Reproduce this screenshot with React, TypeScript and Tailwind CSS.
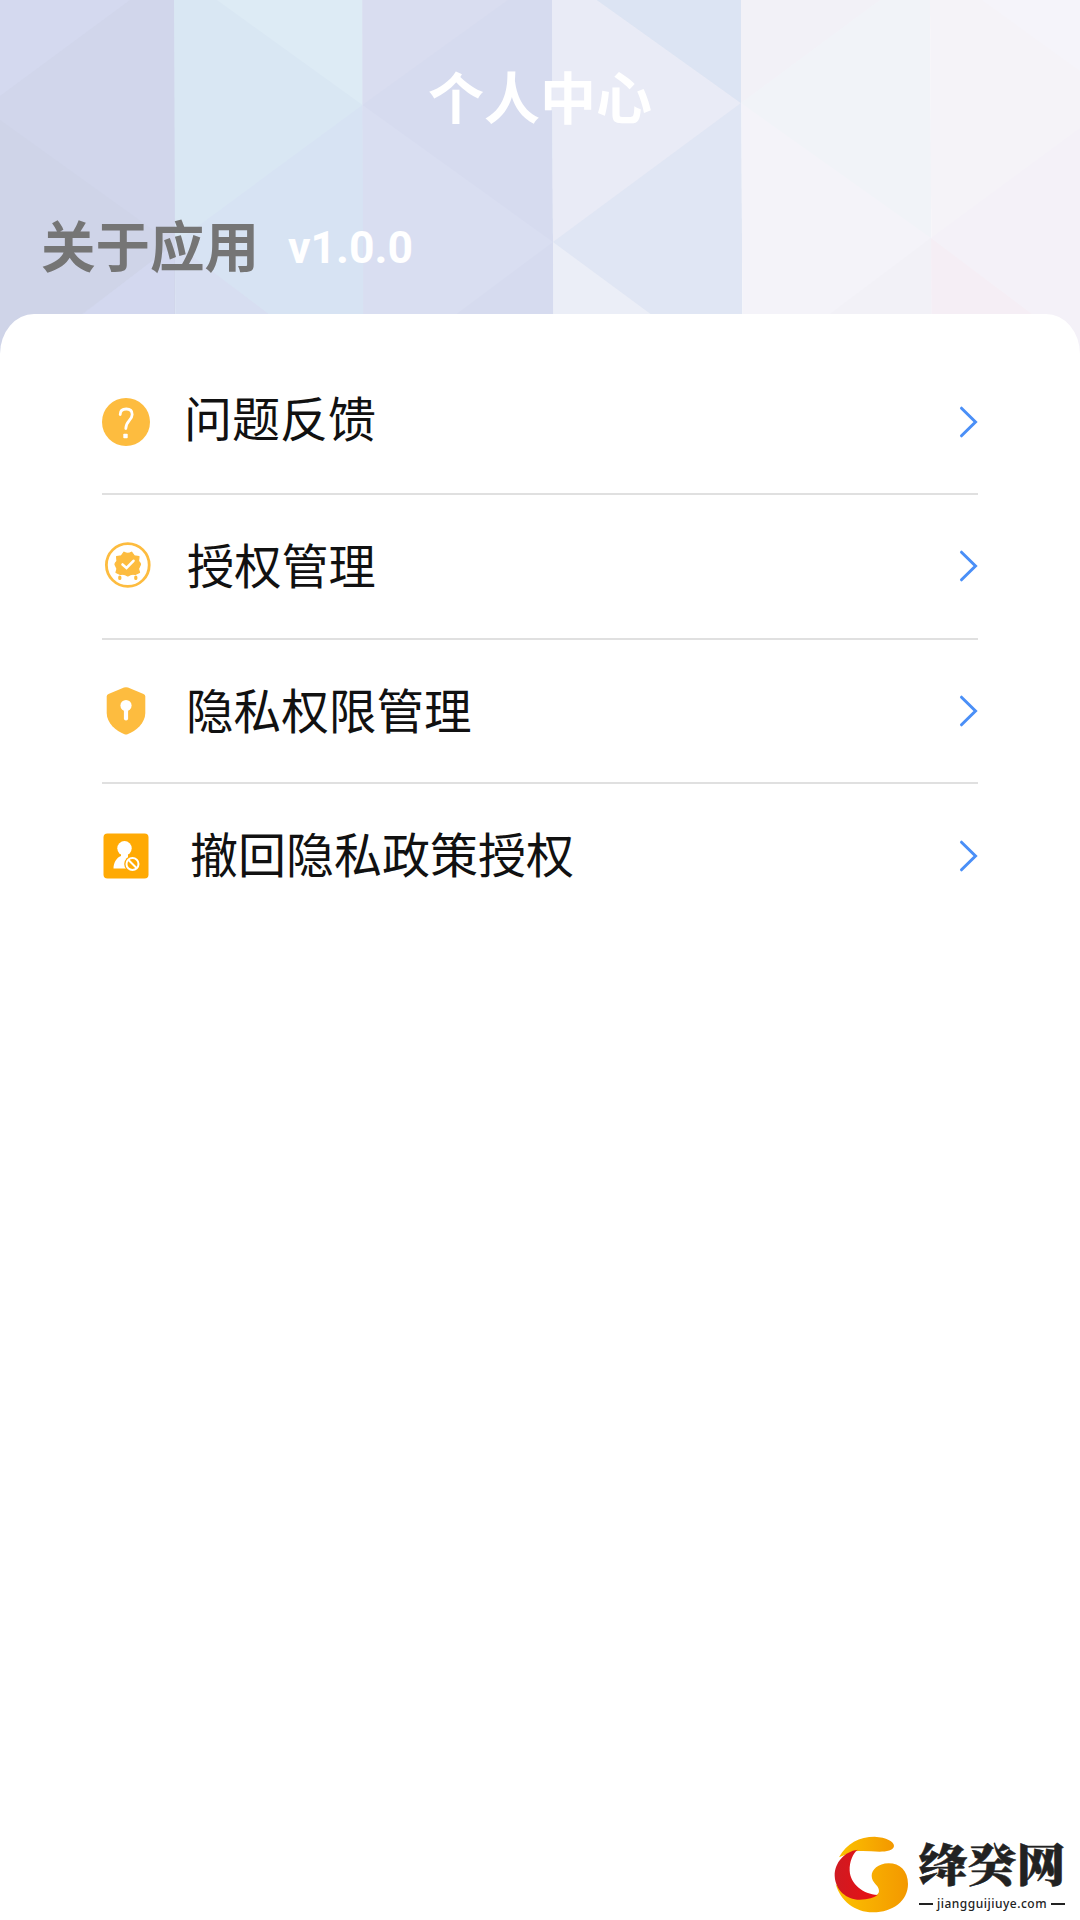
import React from 'react';

interface MenuItem {
  label: string;
  icon: React.ReactNode;
  labelClass: string;
}

const HeaderPattern = () => (
  <svg
    className="absolute inset-0 w-full h-full"
    viewBox="0 0 1080 360"
    preserveAspectRatio="none"
    aria-hidden="true"
  >
    {/* column 1 */}
    <rect width="175" height="360" fill="#d1d6eb" />
    <path d="M0 0H130L0 96Z" fill="#d4d9ef" />
    <path d="M0 120L174 245L20 360H0Z" fill="#cfd4e8" />
    <path d="M174 244V360H23Z" fill="#d3d8ef" />
    {/* column 2 */}
    <path d="M174 0H362.500L363.500 360H175.500Z" fill="#d9e7f3" />
    <path d="M217 0H362.500V105Z" fill="#ddebf5" />
    <path d="M362.500 105L175 243L330 360H364Z" fill="#d7e3f3" />
    <path d="M175 243L330 360H175.500Z" fill="#d7def1" />
    {/* column 3 */}
    <path d="M362.500 0H552L553.500 360H363.500Z" fill="#d6dbef" />
    <path d="M362.500 0H508L362.500 105Z" fill="#d9ddf0" />
    <path d="M362.500 105L553 242L395 360H363.500Z" fill="#d9def1" />
    {/* column 4 */}
    <path d="M552 0H741L742.500 360H553.500Z" fill="#e0e6f4" />
    <path d="M552 0H597L741 103L553 242Z" fill="#e9ebf6" />
    <path d="M597 0H741V103Z" fill="#dce4f3" />
    <path d="M553 242L713 360H553.500Z" fill="#ebeef7" />
    {/* column 5 */}
    <path d="M741 0H930L932 360H742.500Z" fill="#f4f3f9" />
    <path d="M741 0H880L741 103Z" fill="#f2f1f7" />
    <path d="M880 0H930L931 238L741 103Z" fill="#f1f3f8" />
    <path d="M931 238L769 360H932Z" fill="#f2f1f7" />
    {/* column 6 */}
    <path d="M930 0H1080V360H932Z" fill="#f5f3f8" />
    <path d="M982 0H1080V71Z" fill="#f5f4fa" />
    <path d="M1080 128L931 238L1080 350Z" fill="#f4f1f8" />
    <path d="M931 238L1093 360H932Z" fill="#f5eef5" />
  </svg>
);

const FeedbackIcon = () => (
  <svg width="48" height="48" viewBox="0 0 48 48" fill="none">
    <circle cx="24" cy="24" r="24" fill="#fdbc3f" />
    <path
      d="M18.200 16.500C18.200 13 20.500 11 24.300 11C28 11 30.200 13.200 30.200 16.500C30.200 22 23.800 23 23.800 30.500"
      stroke="#fff"
      strokeWidth="2.800"
      strokeLinecap="round"
    />
    <rect x="21.300" y="35.800" width="4.400" height="4.400" rx="0.800" fill="#fff" />
  </svg>
);

const AuthIcon = () => (
  <svg width="48" height="48" viewBox="0 0 48 48" fill="none" className="relative -top-[1px] overflow-visible">
    <circle cx="25.800" cy="24" r="21.400" stroke="#fdbc3f" strokeWidth="2.800" />
    <path
      d="M22 11.200Q25.800 13.500 29.600 11.200L32.300 14.800L37 15.600L36.500 20.200Q39.500 23 38 24.500L36.500 27.800L37.500 31.500L33.300 33.500Q29.500 32.300 25.800 35Q22 32.300 18.300 33.500L14 31.500L15 27.800L13.500 24.500Q12 23 15 20.200L14.600 15.600L19.300 14.800Z"
      fill="#fdbc3f"
      stroke="#fdbc3f"
      strokeWidth="1.200"
      strokeLinejoin="round"
    />
    <path d="M20.500 23.500L24.500 27L31.500 19.800" stroke="#fff" strokeWidth="2.600" strokeLinecap="round" />
    <path d="M17.800 36V37.500M33.800 36V37.500" stroke="#fdbc3f" strokeWidth="3.200" strokeLinecap="round" />
  </svg>
);

const ShieldIcon = () => (
  <svg width="48" height="48" viewBox="0 0 48 48">
    <path
      d="M22 .6Q24 -.2 26 .6L41.500 7Q43.300 7.800 43.300 9.500V26C43.300 36 34 44 25.500 47.200Q24 47.700 22.500 47.200C14 44 4.700 36 4.700 26V9.500Q4.700 7.800 6.500 7Z"
      fill="#fdbc3f"
    />
    <circle cx="24" cy="18.500" r="5.600" fill="#fff" />
    <path d="M24 20V31.500" stroke="#fff" strokeWidth="4.200" strokeLinecap="round" />
  </svg>
);

const RevokeIcon = () => (
  <svg width="48" height="48" viewBox="0 0 48 48" fill="none">
    <rect x="1.500" y="1.500" width="45" height="45" rx="4" fill="#ffaa04" />
    <circle cx="22.500" cy="16.300" r="7.200" fill="#fff" />
    <path d="M19 20H26V25L31 28L26 36.500H11.500C11.500 31 14.500 25.500 19 24Z" fill="#fff" />
    <circle cx="30.500" cy="32" r="8.300" fill="#ffaa04" />
    <circle cx="30.500" cy="32" r="6" stroke="#fff" strokeWidth="2" />
    <path d="M26.500 28L34.500 36" stroke="#fff" strokeWidth="2" />
  </svg>
);

const Chevron = () => (
  <svg width="20" height="32" viewBox="0 0 20 32" fill="none">
    <path d="M2.500 2.200L16.500 16L2.500 29.800" stroke="#4a8ff7" strokeWidth="3" strokeLinecap="round" />
  </svg>
);

const SiteMark = () => (
  <div className="flex items-center">
    <svg width="74" height="78" viewBox="43 46 222 234">
      <defs>
        <linearGradient id="gold" x1="0" x2="1">
          <stop offset="0" stopColor="#fcc200" />
          <stop offset="1" stopColor="#f39800" />
        </linearGradient>
        <linearGradient id="red" x1="0" x2="1">
          <stop offset="0" stopColor="#cf1a22" />
          <stop offset="1" stopColor="#ea0f12" />
        </linearGradient>
      </defs>
      <path
        d="M58 110C80 68 120 48 165 48C200 50 223 62 223 76C222 89 200 93 180 93C155 92 130 89 105 92Z"
        fill="url(#gold)"
      />
      <path
        d="M48 190C62 240 105 275 160 275C220 275 265 240 265 190C265 150 240 128 207 128C175 128 156 148 156 165C156 188 178 192 178 211C178 218 174 222 165 226C120 245 75 225 48 190Z"
        fill="url(#gold)"
      />
      <path
        d="M114 87C75 92 45 125 45 165C47 208 80 237 120 237C145 237 165 230 174 223C130 220 92 190 90 150C89 122 100 98 114 87Z"
        fill="url(#red)"
      />
    </svg>
    <div className="ml-[10px] w-[148px] flex flex-col items-center text-[#222]">
      <div className="text-[49px] leading-[48px] font-black whitespace-nowrap scale-y-[0.92] [-webkit-text-stroke:0.6px_#222] font-['Noto_Serif_CJK_SC','Noto_Sans_CJK_SC',serif]">
        绛癸网
      </div>
      <div className="mt-[9px] w-[146px] flex items-center justify-between">
        <span className="w-[14px] h-[2px] bg-[#222]" />
        <span className="text-[12px] leading-[16px] font-medium tracking-[0.5px] font-['Noto_Sans','Open_Sans',sans-serif]">
          jiangguijiuye.com
        </span>
        <span className="w-[14px] h-[2px] bg-[#222]" />
      </div>
    </div>
  </div>
);

const menuItems: MenuItem[] = [
  { label: '问题反馈', icon: <FeedbackIcon />, labelClass: 'ml-[34px] text-[48px] -mt-[2px]' },
  { label: '授权管理', icon: <AuthIcon />, labelClass: 'ml-[37px] text-[47.200px] mt-[4px]' },
  { label: '隐私权限管理', icon: <ShieldIcon />, labelClass: 'ml-[36px] text-[47.600px] mt-[4px]' },
  { label: '撤回隐私政策授权', icon: <RevokeIcon />, labelClass: 'ml-[40px] text-[48px] mt-[2px]' },
];

const App: React.FC = () => {
  return (
    <div className="w-[1080px] h-[1920px] overflow-hidden flex flex-col bg-white font-['Roboto','Noto_Sans_CJK_SC',sans-serif]">
      <header className="relative h-[360px] shrink-0">
        <HeaderPattern />
        <div className="relative flex flex-col">
          <h1 className="mt-[60px] text-center text-[56px] leading-[80px] font-bold text-white">个人中心</h1>
          <div className="mt-[68px] pl-[41px] flex items-center leading-[80px] font-bold">
            <span className="text-[54.500px] text-[#757575]">关于应用</span>
            <span className="ml-[29px] text-[44.500px] text-white">v1.0.0</span>
          </div>
        </div>
      </header>

      <main className="relative -mt-[46px] flex-1 rounded-t-[34px_40px] bg-white px-[102px] pt-[36.500px]">
        {menuItems.map((item, i) => (
          <button
            key={item.label}
            className={
              i < menuItems.length - 1
                ? 'w-full h-[144.600px] flex items-center border-b-2 border-[#e0e0e0] text-left'
                : 'w-full h-[143px] flex items-center text-left'
            }
          >
            {item.icon}
            <span className={`${item.labelClass} leading-[70px] text-[#111]`}>{item.label}</span>
            <span className="ml-auto -mr-[1px]">
              <Chevron />
            </span>
          </button>
        ))}
      </main>

      <footer className="relative flex justify-end pr-[14px] pb-[6px]">
        <SiteMark />
      </footer>
    </div>
  );
};

export default App;
